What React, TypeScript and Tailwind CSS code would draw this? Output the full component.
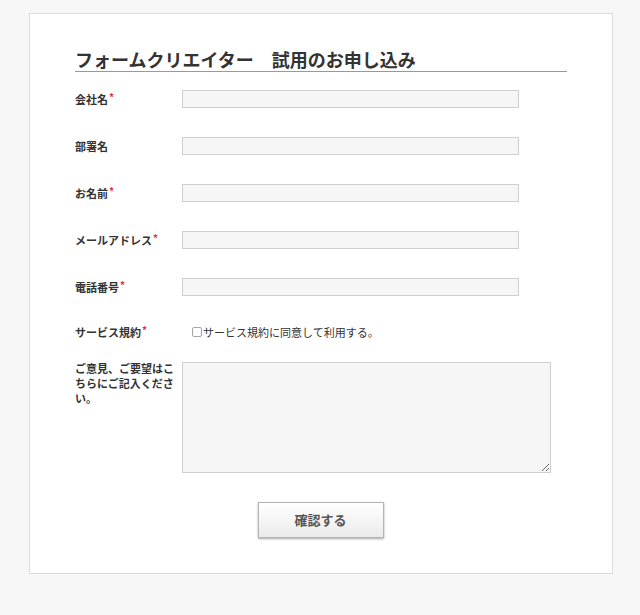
import React from "react";

const Req = () => <span className="ml-[1px] text-[#d9343a] font-bold text-[10px] leading-none relative -top-[2px]">*</span>;

function Row({ label, req, children, className = "" }: { label: string; req?: boolean; children: React.ReactNode; className?: string }) {
  return (
    <div className={`flex items-center h-[18px] ${className}`}>
      <div className="w-[107px] h-[18px] shrink-0 flex items-center text-[11px] font-bold text-[#333] leading-[18px]">
        <span>{label}</span>
        {req && <Req />}
      </div>
      {children}
    </div>
  );
}

export default function App() {
  return (
    <div className="min-h-[615px] bg-[#f7f7f7] pt-[13px] pl-[29px] font-['Noto_Sans_CJK_JP',sans-serif]">
      <div className="w-[584px] h-[561px] bg-white border border-[#dcdcdc] px-[45px] pt-[33px]">
        <h1 className="text-[18px] leading-[24px] font-bold text-[#333] border-b border-[#999] whitespace-nowrap">
          フォームクリエイター　試用のお申し込み
        </h1>
        <div className="flex flex-col mt-[18px]">
          <Row label="会社名" req>
            <input className="w-[337px] h-[18px] border border-[#cfcfcf] bg-[#f6f6f6]" readOnly />
          </Row>
          <Row label="部署名" className="mt-[29px]">
            <input className="w-[337px] h-[18px] border border-[#cfcfcf] bg-[#f6f6f6]" readOnly />
          </Row>
          <Row label="お名前" req className="mt-[29px]">
            <input className="w-[337px] h-[18px] border border-[#cfcfcf] bg-[#f6f6f6]" readOnly />
          </Row>
          <Row label="メールアドレス" req className="mt-[29px]">
            <input className="w-[337px] h-[18px] border border-[#cfcfcf] bg-[#f6f6f6]" readOnly />
          </Row>
          <Row label="電話番号" req className="mt-[29px]">
            <input className="w-[337px] h-[18px] border border-[#cfcfcf] bg-[#f6f6f6]" readOnly />
          </Row>
          <Row label="サービス規約" req className="mt-[27px]">
            <label className="flex items-center ml-[10px] text-[11px] text-[#333] leading-[18px]">
              <span className="w-[10px] h-[10px] border border-[#a5a5a5] rounded-[2px] bg-white mr-[1px]" />
              サービス規約に同意して利用する。
            </label>
          </Row>
          <div className="flex items-start mt-[21px]">
            <div className="w-[107px] shrink-0 -mt-[1px]">
              <div className="w-[100px] text-[11px] font-bold text-[#333] leading-[15px]">
                ご意見、ご要望はこちらにご記入ください。
              </div>
            </div>
            <textarea className="w-[369px] h-[111px] border border-[#cfcfcf] bg-[#f6f6f6]" readOnly />
          </div>
          <div className="flex justify-center mt-[29px] -ml-[1px]">
            <button className="w-[126px] h-[36px] border border-[#b5b5b5] bg-gradient-to-b from-white to-[#ebebeb] shadow-[0_1px_2px_rgba(0,0,0,0.35)] text-[13px] font-bold text-[#555]">
              確認する
            </button>
          </div>
        </div>
      </div>
    </div>
  );
}
